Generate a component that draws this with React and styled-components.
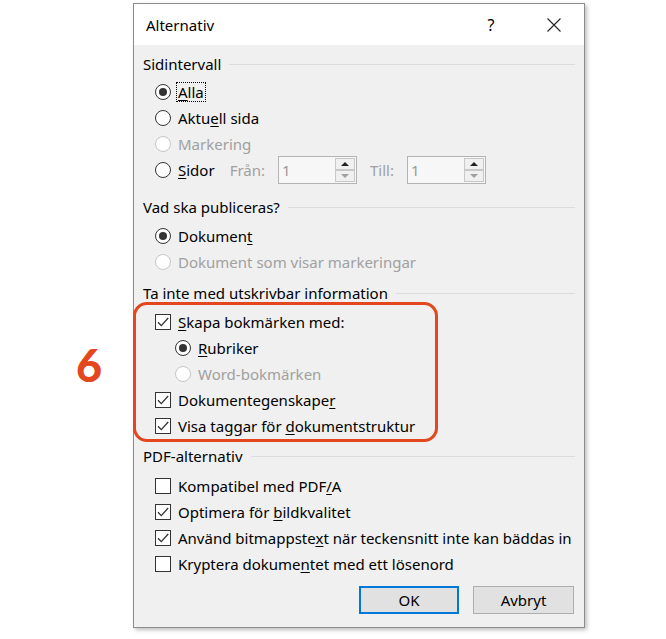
import styled, { createGlobalStyle } from "styled-components";

const GlobalStyle = createGlobalStyle`
  html, body {
    margin: 0;
    padding: 0;
    background: #fff;
  }
  body {
    font-family: "Noto Sans", "Segoe UI", sans-serif;
  }
`;

const accent = "#e4461d";

const Page = styled.div`
  position: relative;
  width: 666px;
  height: 639px;
  padding: 3px 0 0 133px;
  box-sizing: border-box;
`;

const Callout = styled.div`
  position: absolute;
  left: 76px;
  top: 343px;
  font-family: Lato, sans-serif;
  font-weight: 900;
  font-size: 45px;
  line-height: 1;
  color: ${accent};
`;

const Dialog = styled.div`
  width: 452px;
  height: 625px;
  box-sizing: border-box;
  border: 1px solid #8c8c8c;
  background: #f0f0f0;
  box-shadow: 2px 2px 4px rgba(0, 0, 0, 0.25);
  display: flex;
  flex-direction: column;
  font-size: 15px;
  color: #000;
`;

const TitleBar = styled.div`
  height: 41px;
  flex: none;
  background: #fff;
  display: flex;
  align-items: center;
  padding: 0 7px 0 12px;
`;

const Title = styled.div`
  flex: 1;
`;

const TitleButton = styled.div`
  width: ${(p) => p.$w}px;
  height: 30px;
  display: flex;
  align-items: center;
  justify-content: center;
  font-size: 16px;
  margin-left: ${(p) => p.$gap || 0}px;
`;

const Body = styled.div`
  flex: 1;
  padding: 9px 9px 0 9px;
  display: flex;
  flex-direction: column;
`;

const GroupHead = styled.div`
  display: flex;
  align-items: center;
  gap: 8px;
  height: 20px;
  margin-top: ${(p) => p.$top || 0}px;
  white-space: nowrap;
  &::after {
    content: "";
    flex: 1;
    height: 1px;
    background: #dcdcdc;
  }
`;

const List = styled.div`
  padding-left: 12px;
  margin-top: ${(p) => p.$top || 0}px;
`;

const Row = styled.div`
  height: 26px;
  display: flex;
  align-items: center;
  gap: 7px;
  padding-left: ${(p) => (p.$level ? 20 : 0)}px;
  white-space: nowrap;
  color: ${(p) => (p.$disabled ? "#a0a0a0" : "#000")};
`;

const RadioDot = styled.span`
  width: 16px;
  height: 16px;
  flex: none;
  box-sizing: border-box;
  border-radius: 50%;
  border: 1px solid ${(p) => (p.$disabled ? "#c6c6c6" : "#333")};
  background: #fff;
  display: flex;
  align-items: center;
  justify-content: center;
  &::after {
    content: "";
    width: 8px;
    height: 8px;
    border-radius: 50%;
    background: #333;
    display: ${(p) => (p.$checked ? "block" : "none")};
  }
`;

const Box = styled.span`
  width: 16px;
  height: 16px;
  flex: none;
  box-sizing: border-box;
  border: 1px solid #333;
  background: #fff;
  display: flex;
  align-items: center;
  justify-content: center;
`;

const Key = styled.span`
  text-decoration: underline;
  text-decoration-thickness: 1px;
  text-underline-offset: 2px;
`;

const Focus = styled.span`
  display: inline-block;
  line-height: 18px;
  padding: 0 1px;
  margin-left: -2px;
  border: 1px dotted #000;
`;

const Range = styled.div`
  display: flex;
  align-items: center;
  margin-left: 8px;
  color: #a0a0a0;
`;

const RangeLabel = styled.span`
  margin: 0 13px 0 ${(p) => p.$left || 0}px;
`;

const Spin = styled.div`
  width: 79px;
  height: 28px;
  box-sizing: border-box;
  border: 1px solid #b4b4b4;
  background: #f7f7f7;
  display: flex;
`;

const SpinValue = styled.div`
  flex: 1;
  display: flex;
  align-items: center;
  padding-left: 3px;
  color: #9a9a9a;
`;

const SpinButtons = styled.div`
  width: 20px;
  display: flex;
  flex-direction: column;
  padding: 1px 1px 1px 0;
`;

const SpinButton = styled.div`
  flex: 1;
  border: 1px solid #c8c8c8;
  background: #f0f0f0;
  display: flex;
  align-items: center;
  justify-content: center;
  &::after {
    content: "";
    border-left: 4px solid transparent;
    border-right: 4px solid transparent;
    ${(p) =>
      p.$down
        ? "border-top: 4px solid #a0a0a0;"
        : "border-bottom: 4px solid #222;"}
  }
`;

const Highlight = styled.div`
  margin: -1px 0 0 -10px;
  width: 305px;
  box-sizing: border-box;
  border: 3px solid ${accent};
  border-radius: 14px;
  padding: 4px 0 0 19px;
  height: 140px;
`;

const Actions = styled.div`
  display: flex;
  justify-content: flex-end;
  gap: 14px;
  margin-top: 9px;
  padding-right: 1px;
`;

const Button = styled.div`
  width: ${(p) => p.$w}px;
  height: 28px;
  box-sizing: border-box;
  background: #e1e1e1;
  border: ${(p) => (p.$default ? "2px solid #0078d7" : "1px solid #adadad")};
  display: flex;
  align-items: center;
  justify-content: center;
`;

const Check = () => (
  <svg width="14" height="14" viewBox="0 0 14 14">
    <polyline
      points="2,7.2 5.3,10.6 12.2,3"
      fill="none"
      stroke="#333"
      strokeWidth="1.3"
    />
  </svg>
);

const Radio = ({ checked, disabled, children }) => (
  <Row $disabled={disabled}>
    <RadioDot $checked={checked} $disabled={disabled} />
    <span>{children}</span>
  </Row>
);

const CheckRow = ({ checked, children }) => (
  <Row>
    <Box>{checked && <Check />}</Box>
    <span>{children}</span>
  </Row>
);

const Spinner = () => (
  <Spin>
    <SpinValue>1</SpinValue>
    <SpinButtons>
      <SpinButton />
      <SpinButton $down />
    </SpinButtons>
  </Spin>
);

export default function App() {
  return (
    <>
      <GlobalStyle />
      <Page>
        <Callout>6</Callout>
        <Dialog>
          <TitleBar>
            <Title>Alternativ</Title>
            <TitleButton $w={30}>?</TitleButton>
            <TitleButton $w={46} $gap={25}>
              <svg width="14" height="14" viewBox="0 0 14 14">
                <path d="M0.5 0.5 L13.5 13.5 M13.5 0.5 L0.5 13.5" stroke="#222" strokeWidth="1.1" />
              </svg>
            </TitleButton>
          </TitleBar>
          <Body>
            <GroupHead>Sidintervall</GroupHead>
            <List $top={5}>
              <Row>
                <RadioDot $checked />
                <Focus>
                  <Key>A</Key>lla
                </Focus>
              </Row>
              <Radio>
                Aktu<Key>e</Key>ll sida
              </Radio>
              <Radio disabled>Markering</Radio>
              <Row>
                <RadioDot />
                <span>
                  <Key>S</Key>idor
                </span>
                <Range>
                  <RangeLabel>Från:</RangeLabel>
                  <Spinner />
                  <RangeLabel $left={13}>Till:</RangeLabel>
                  <Spinner />
                </Range>
              </Row>
            </List>

            <GroupHead $top={14}>Vad ska publiceras?</GroupHead>
            <List $top={6}>
              <Radio checked>
                Dokumen<Key>t</Key>
              </Radio>
              <Radio disabled>Dokument som visar markeringar</Radio>
            </List>

            <GroupHead $top={8}>Ta inte med utskrivbar information</GroupHead>
            <Highlight>
              <CheckRow checked>
                <Key>S</Key>kapa bokmärken med:
              </CheckRow>
              <Row $level>
                <RadioDot $checked />
                <span>
                  <Key>R</Key>ubriker
                </span>
              </Row>
              <Row $level $disabled>
                <RadioDot $disabled />
                <span>Word-bokmärken</span>
              </Row>
              <CheckRow checked>
                Dokumentegenskape<Key>r</Key>
              </CheckRow>
              <CheckRow checked>
                Visa taggar för <Key>d</Key>okumentstruktur
              </CheckRow>
            </Highlight>

            <GroupHead $top={4}>PDF-alternativ</GroupHead>
            <List $top={7}>
              <CheckRow>
                Kompatibel med PDF<Key>/</Key>A
              </CheckRow>
              <CheckRow checked>
                Optimera för <Key>b</Key>ildkvalitet
              </CheckRow>
              <CheckRow checked>
                Använd bitmappste<Key>x</Key>t när teckensnitt inte kan bäddas in
              </CheckRow>
              <CheckRow>
                Kryptera dokume<Key>n</Key>tet med ett lösenord
              </CheckRow>
            </List>

            <Actions>
              <Button $w={100} $default>
                OK
              </Button>
              <Button $w={101}>Avbryt</Button>
            </Actions>
          </Body>
        </Dialog>
      </Page>
    </>
  );
}
